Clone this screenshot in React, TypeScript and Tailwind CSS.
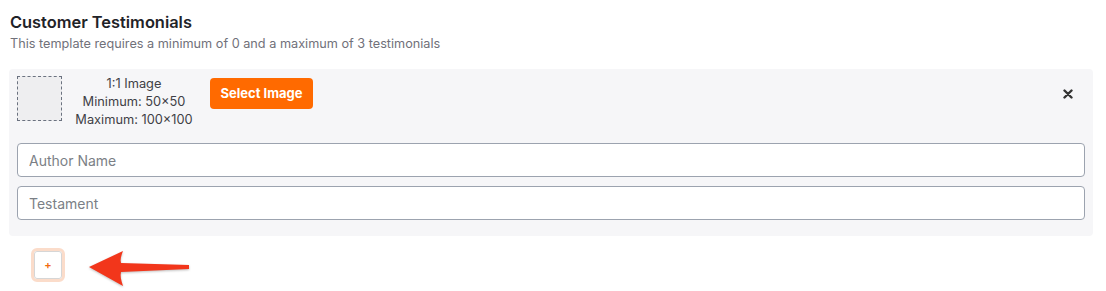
import React from "react";

const ImageRequirements = () => (
  <div className="flex flex-col items-center text-[12.8px] leading-[18px] text-[#3f3f46] w-[118px] -mt-[2px]">
    <p>1:1 Image</p>
    <p>Minimum: 50×50</p>
    <p>Maximum: 100×100</p>
  </div>
);

const CloseIcon = () => (
  <svg width="10" height="10" viewBox="0 0 10 10">
    <path d="M1.5 1.5 L8.5 8.5 M8.5 1.5 L1.5 8.5" stroke="#333" strokeWidth="2.4" strokeLinecap="round" />
  </svg>
);

const Arrow = () => (
  <svg width="106" height="40" viewBox="0 0 106 40" className="drop-shadow-[0_1px_1px_rgba(0,0,0,0.25)]">
    <path
      d="M2 19 L36 3 C34 8 33 12 34 15 L102 17 L102 21 L34 24 C33 28 34 32 36 38 Z"
      fill="#f2361b"
    />
  </svg>
);

export default function App() {
  return (
    <div className="w-[1106px] h-[291px] bg-white font-['Inter',sans-serif] px-[9px] pt-[12px]">
      <h2 className="pl-[1px] text-[16.4px] leading-[20px] font-semibold text-[#1f2328]">Customer Testimonials</h2>
      <p className="pl-[1px] mt-[3px] text-[12.7px] leading-[18px] text-[#71717a]">
        This template requires a minimum of 0 and a maximum of 3 testimonials
      </p>

      <div className="mt-[16px] w-[1084px] rounded-[4px] bg-[#f6f6f8] px-[8px] pt-[7px] pb-[16px]">
        <div className="flex items-start">
          <div className="w-[45px] h-[45px] border border-dashed border-[#6b7280] bg-[#eeeef0]" />
          <div className="ml-[13px] pt-[1px]">
            <ImageRequirements />
          </div>
          <button className="ml-[17px] mt-[2px] h-[31px] w-[103px] rounded-[4px] bg-[#ff6a00] text-[13px] font-bold text-white">
            Select Image
          </button>
          <div className="ml-auto mr-[12px] mt-[13px]">
            <CloseIcon />
          </div>
        </div>

        <div className="mt-[14px] flex flex-col gap-[9px] w-[1068px]">
          <input
            placeholder="Author Name"
            className="h-[34px] w-full rounded-[4px] border border-[#9ca3af] bg-white px-[11px] text-[14px] text-[#333] placeholder:text-[#7b7f86] outline-none"
          />
          <input
            placeholder="Testament"
            className="h-[34px] w-full rounded-[4px] border border-[#9ca3af] bg-white px-[11px] text-[14px] text-[#333] placeholder:text-[#7b7f86] outline-none"
          />
        </div>
      </div>

      <div className="flex items-start mt-[12px] pl-[22px]">
        <button className="w-[34px] h-[34px] rounded-[6px] border-[3px] border-[#fbdcca] bg-white flex items-center justify-center">
          <span className="flex items-center justify-center w-[28px] h-[28px] rounded-[3px] border border-[#d6d6d6] text-[11px] font-semibold text-[#f26a10] leading-none">
            +
          </span>
        </button>
        <div className="ml-[22px] mt-[0px]">
          <Arrow />
        </div>
      </div>
    </div>
  );
}
